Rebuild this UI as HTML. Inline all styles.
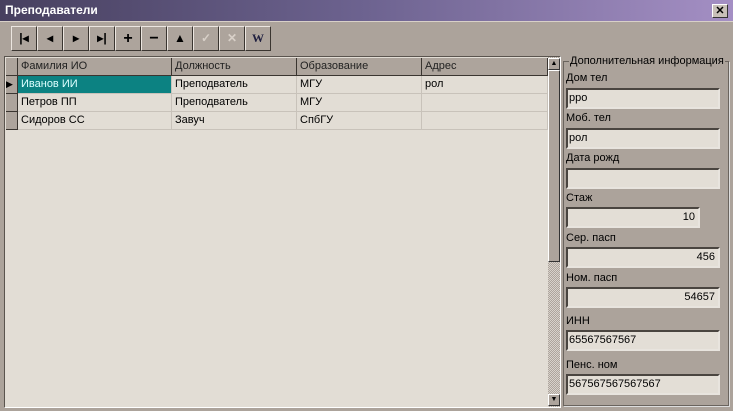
<html><head><style>
body{margin:0;width:733px;height:411px;background:#aca39b;font-family:"Liberation Sans",sans-serif;font-size:11px;position:relative;overflow:hidden;color:#000}
.a{position:absolute}
.title{left:0;top:0;width:733px;height:21px;background:linear-gradient(90deg,#47405f,#6d6390 50%,#a48fc4);color:#fff;font-weight:bold;font-size:12px;line-height:21px;text-indent:5px;border-bottom:1px solid #d8d0c8}
.x{left:712px;top:4px;width:14px;height:12px;background:#c8c0b8;border:1px solid;border-color:#fff #333 #333 #fff;font-size:11px;line-height:12px;text-align:center;font-weight:bold;color:#000}
.btn{top:26px;width:24px;height:23px;background:#ada49c;border:1px solid;border-color:#ece6e0 #3a3530 #3a3530 #ece6e0;text-align:center;line-height:23px;font-weight:bold;font-size:12px}
.grid{left:4px;top:56px;width:555px;height:350px;background:#e2ddd5;border:1px solid;border-color:#5a544e #fff #fff #5a544e}
.hd{top:1px;height:17px;background:#ada49c;border-right:1px solid #3a3530;border-bottom:1px solid #3a3530;line-height:17px;text-indent:3px;color:#222}
.c{height:17px;border-right:1px solid #c8c2ba;border-bottom:1px solid #c8c2ba;line-height:17px;text-indent:3px}
.ind{left:1px;width:11px;height:17px;background:#ada49c;border-right:1px solid #3a3530;border-bottom:1px solid #3a3530}
.sb{left:543px;top:0;width:12px;height:350px;background:repeating-conic-gradient(#d8d2cb 0 25%,#ada49c 0 50%) 0 0/2px 2px}
.sbb{width:10px;height:10px;background:#ada49c;border:1px solid;border-color:#fff #333 #333 #fff;font-size:7px;line-height:10px;text-align:center}
.gb{left:563px;top:61px;width:164px;height:343px;border:1px solid #6a645e;box-shadow:1px 1px 0 #ddd}
.lb{left:566px;color:#000}
.f{left:566px;width:150px;height:17px;background:#e3ded6;border:2px solid;border-color:#4a4540 #e8e4de #e8e4de #4a4540;line-height:17px;text-indent:1px}
.r{text-align:right;padding-right:3px;width:147px}
</style></head><body>
<div class="a title">Преподаватели</div>
<div class="a x">✕</div>
<div class="a btn" style="left:11px">|◂</div>
<div class="a btn" style="left:37px">◂</div>
<div class="a btn" style="left:63px">▸</div>
<div class="a btn" style="left:89px">▸|</div>
<div class="a btn" style="left:115px;font-size:16px">+</div>
<div class="a btn" style="left:141px;font-size:16px">−</div>
<div class="a btn" style="left:167px">▲</div>
<div class="a btn" style="left:193px;color:#d8d0c8">✓</div>
<div class="a btn" style="left:219px;color:#d8d0c8">✕</div>
<div class="a btn" style="left:245px;font-family:'Liberation Serif';color:#202040">W</div>
<div class="a grid">
<div class="a ind" style="top:1px"></div>
<div class="a hd" style="left:13px;width:153px">Фамилия ИО</div>
<div class="a hd" style="left:167px;width:124px">Должность</div>
<div class="a hd" style="left:292px;width:124px">Образование</div>
<div class="a hd" style="left:417px;width:125px">Адрес</div>
<div class="a ind" style="top:19px;font-size:9px;line-height:17px">▶</div>
<div class="a ind" style="top:37px"></div>
<div class="a ind" style="top:55px"></div>
<div class="a c" style="left:13px;top:19px;width:153px;background:#0c8282;color:#dff">Иванов ИИ</div>
<div class="a c" style="left:167px;top:19px;width:124px">Преподватель</div>
<div class="a c" style="left:292px;top:19px;width:124px">МГУ</div>
<div class="a c" style="left:417px;top:19px;width:125px">рол</div>
<div class="a c" style="left:13px;top:37px;width:153px">Петров ПП</div>
<div class="a c" style="left:167px;top:37px;width:124px">Преподватель</div>
<div class="a c" style="left:292px;top:37px;width:124px">МГУ</div>
<div class="a c" style="left:417px;top:37px;width:125px"></div>
<div class="a c" style="left:13px;top:55px;width:153px">Сидоров СС</div>
<div class="a c" style="left:167px;top:55px;width:124px">Завуч</div>
<div class="a c" style="left:292px;top:55px;width:124px">СпбГУ</div>
<div class="a c" style="left:417px;top:55px;width:125px"></div>
<div class="a sb"><div class="a sbb" style="top:1px">▲</div><div class="a" style="top:13px;width:10px;height:190px;background:#ada49c;border:1px solid;border-color:#fff #333 #333 #fff"></div><div class="a sbb" style="top:337px">▼</div></div>
</div>
<div class="a gb"></div>
<div class="a" style="left:569px;top:55px;background:#aca39b;padding:0 1px">Дополнительная информация</div>
<div class="a lb" style="top:72px">Дом тел</div><div class="a f" style="top:88px">рро</div>
<div class="a lb" style="top:112px">Моб. тел</div><div class="a f" style="top:128px">рол</div>
<div class="a lb" style="top:152px">Дата рожд</div><div class="a f" style="top:168px"></div>
<div class="a lb" style="top:192px">Стаж</div><div class="a f r" style="top:207px;width:127px">10</div>
<div class="a lb" style="top:232px">Сер. пасп</div><div class="a f r" style="top:247px">456</div>
<div class="a lb" style="top:272px">Ном. пасп</div><div class="a f r" style="top:287px">54657</div>
<div class="a lb" style="top:315px">ИНН</div><div class="a f" style="top:330px">65567567567</div>
<div class="a lb" style="top:359px">Пенс. ном</div><div class="a f" style="top:374px">567567567567567</div>
</body></html>
